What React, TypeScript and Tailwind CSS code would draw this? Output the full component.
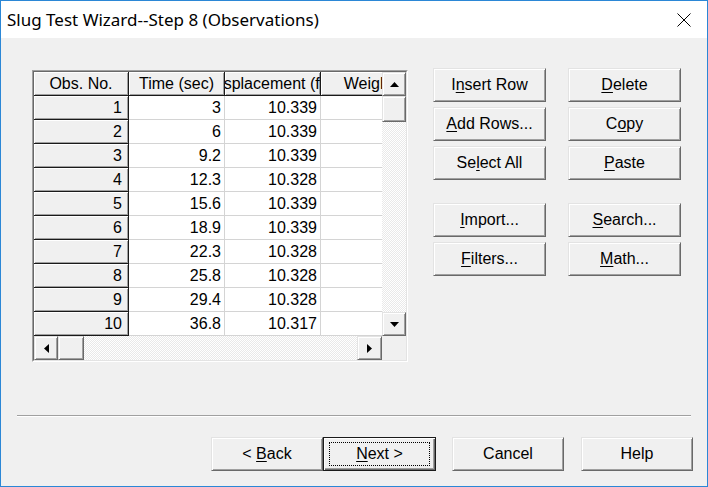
import React from "react";

const raised =
  "bg-[#f0f0f0] border border-t-[#e3e3e3] border-l-[#e3e3e3] border-r-[#696969] border-b-[#696969] shadow-[inset_1px_1px_0_#ffffff,inset_-1px_-1px_0_#a0a0a0]";

function Btn({
  children,
  className = "",
}: {
  children: React.ReactNode;
  className?: string;
}) {
  return (
    <div
      className={
        "flex h-[34px] items-center justify-center text-[16px] leading-none text-black " +
        raised +
        " " +
        className
      }
    >
      <span>{children}</span>
    </div>
  );
}

function U({ children }: { children: React.ReactNode }) {
  return <span className="underline underline-offset-[2px]">{children}</span>;
}

function Tri({ dir }: { dir: "up" | "down" | "left" | "right" }) {
  const pts: Record<string, string> = {
    up: "0,5 9,5 4.5,0",
    down: "0,0 9,0 4.5,5",
    left: "5,0 5,9 0,4.5",
    right: "0,0 0,9 5,4.5",
  };
  const vert = dir === "up" || dir === "down";
  return (
    <svg
      width={vert ? 9 : 5}
      height={vert ? 5 : 9}
      viewBox={vert ? "0 0 9 5" : "0 0 5 9"}
      className="block"
    >
      <polygon points={pts[dir]} fill="#000" />
    </svg>
  );
}

const rows: [string, string, string][] = [
  ["1", "3", "10.339"],
  ["2", "6", "10.339"],
  ["3", "9.2", "10.339"],
  ["4", "12.3", "10.328"],
  ["5", "15.6", "10.339"],
  ["6", "18.9", "10.339"],
  ["7", "22.3", "10.328"],
  ["8", "25.8", "10.328"],
  ["9", "29.4", "10.328"],
  ["10", "36.8", "10.317"],
];

const hdrCell =
  "flex h-[24px] shrink-0 items-center overflow-hidden whitespace-nowrap bg-[#f0f0f0] border-r border-b border-[#1a1a1a] shadow-[inset_1px_1px_0_#ffffff,inset_-1px_-1px_0_#a0a0a0]";
const dataCell =
  "flex h-[24px] shrink-0 items-center justify-end overflow-hidden whitespace-nowrap bg-white border-r border-b border-[#d4d4d4] pr-[3px]";

const track =
  "bg-[repeating-conic-gradient(#e9e9e9_0%_25%,#ffffff_0%_50%)] bg-[length:2px_2px]";

function Grid() {
  return (
    <div className="mt-[2px] h-[292px] w-[376px] shrink-0 border border-t-[#a0a0a0] border-l-[#a0a0a0] border-r-white border-b-white">
      <div className="flex h-full flex-col border border-t-[#696969] border-l-[#696969] border-r-[#e3e3e3] border-b-[#e3e3e3] bg-[#f0f0f0]">
        <div className="flex h-[264px]">
          <div className="flex w-[348px] flex-col overflow-hidden bg-white font-['Liberation_Sans',Arial,sans-serif] text-[16px] leading-none text-black">
            <div className="flex">
              <div className={hdrCell + " w-[95px] justify-center"}>
                <span>Obs. No.</span>
              </div>
              <div className={hdrCell + " w-[96px] justify-center"}>
                <span>Time (sec)</span>
              </div>
              <div className={hdrCell + " w-[96px] justify-center"}>
                <span className="shrink-0 pr-[7px]">Displacement (ft)</span>
              </div>
              <div className={hdrCell + " w-[96px] justify-center"}>
                <span className="shrink-0">Weight</span>
              </div>
            </div>
            {rows.map((r) => (
              <div className="flex" key={r[0]}>
                <div className={hdrCell + " w-[95px] justify-end pr-[6px]"}>
                  <span>{r[0]}</span>
                </div>
                <div className={dataCell + " w-[96px]"}>
                  <span>{r[1]}</span>
                </div>
                <div className={dataCell + " w-[96px]"}>
                  <span>{r[2]}</span>
                </div>
                <div className={dataCell + " w-[96px]"}>
                  <span></span>
                </div>
              </div>
            ))}
          </div>
          <div className="flex w-[24px] flex-col">
            <div className={"flex h-[24px] items-center justify-center " + raised}>
              <Tri dir="up" />
            </div>
            <div className={"h-[26px] " + raised}></div>
            <div className={"flex-1 " + track}></div>
            <div className={"flex h-[24px] items-center justify-center " + raised}>
              <Tri dir="down" />
            </div>
          </div>
        </div>
        <div className="flex h-[24px]">
          <div className="flex w-[348px]">
            <div className={"flex w-[24px] items-center justify-center " + raised}>
              <Tri dir="left" />
            </div>
            <div className={"w-[26px] " + raised}></div>
            <div className={"flex-1 " + track}></div>
            <div className={"flex w-[25px] items-center justify-center " + raised}>
              <Tri dir="right" />
            </div>
          </div>
          <div className="w-[24px] bg-[#f0f0f0]"></div>
        </div>
      </div>
    </div>
  );
}

export default function App() {
  return (
    <div className="flex h-[487px] w-[708px] flex-col border border-[#2b87d6] bg-[#f0f0f0] font-['Liberation_Sans',Arial,sans-serif] text-black">
      <div className="flex h-[37px] shrink-0 items-center justify-between bg-white pl-[6px] pr-[16px]">
        <span className="font-['Noto_Sans',sans-serif] text-[17px] leading-none">
          Slug Test Wizard--Step 8 (Observations)
        </span>
        <svg width="14" height="14" viewBox="0 0 14 14" className="block">
          <path d="M0.5 0.5 L13.5 13.5 M13.5 0.5 L0.5 13.5" stroke="#000" strokeWidth="1" fill="none" />
        </svg>
      </div>
      <div className="flex flex-1 flex-col">
        <div className="flex pl-[31px] pt-[30px]">
          <Grid />
          <div className="ml-[25px] grid h-fit grid-cols-[113px_113px] gap-x-[22px] gap-y-[5px]">
            <Btn>
              I<U>n</U>sert Row
            </Btn>
            <Btn>
              <U>D</U>elete
            </Btn>
            <Btn>
              <U>A</U>dd Rows...
            </Btn>
            <Btn>
              C<U>o</U>py
            </Btn>
            <Btn>
              Se<U>l</U>ect All
            </Btn>
            <Btn>
              <U>P</U>aste
            </Btn>
            <Btn className="mt-[18px]">
              <U>I</U>mport...
            </Btn>
            <Btn className="mt-[18px]">
              <U>S</U>earch...
            </Btn>
            <Btn>
              <U>F</U>ilters...
            </Btn>
            <Btn>
              <U>M</U>ath...
            </Btn>
          </div>
        </div>
        <div className="ml-[16px] mt-[53px] h-[2px] w-[674px] border-t border-b border-t-[#a0a0a0] border-b-white"></div>
        <div className="mt-[20px] flex justify-end pr-[14px]">
          <Btn className="w-[112px]">
            &lt; <U>B</U>ack
          </Btn>
          <div className="flex h-[34px] w-[113px] items-center justify-center border border-[#1a1a1a] bg-[#f0f0f0] text-[16px] leading-none shadow-[inset_1px_1px_0_#ffffff,inset_-1px_-1px_0_#696969,inset_-2px_-2px_0_#a0a0a0]">
            <div className="flex h-[24px] w-[101px] items-center justify-center border border-dotted border-black">
              <span>
                <U>N</U>ext &gt;
              </span>
            </div>
          </div>
          <Btn className="ml-[16px] w-[112px]">Cancel</Btn>
          <Btn className="ml-[17px] w-[112px]">Help</Btn>
        </div>
      </div>
    </div>
  );
}
